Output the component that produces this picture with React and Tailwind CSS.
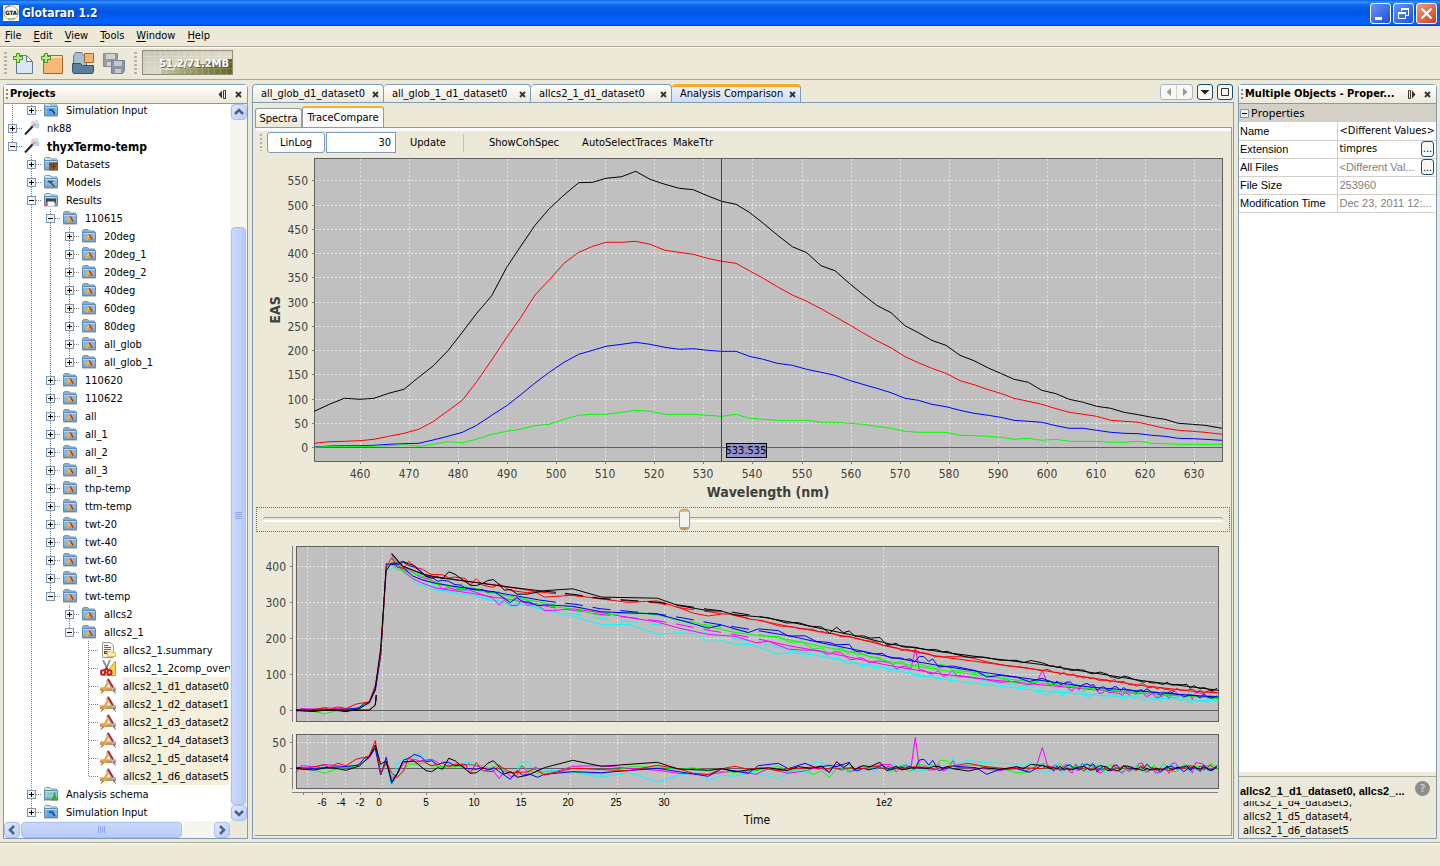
import React, { useState } from 'react';

const treeRows = [
  { level: 1, label: 'Simulation Input', icon: 'input', state: 'closed' },
  { level: 0, label: 'nk88', icon: 'wand', state: 'closed' },
  { level: 0, label: 'thyxTermo-temp', icon: 'wand', state: 'open', bold: true },
  { level: 1, label: 'Datasets', icon: 'datasets', state: 'closed' },
  { level: 1, label: 'Models', icon: 'models', state: 'closed' },
  { level: 1, label: 'Results', icon: 'results', state: 'open' },
  { level: 2, label: '110615', icon: 'folder', state: 'open' },
  { level: 3, label: '20deg', icon: 'folder', state: 'closed' },
  { level: 3, label: '20deg_1', icon: 'folder', state: 'closed' },
  { level: 3, label: '20deg_2', icon: 'folder', state: 'closed' },
  { level: 3, label: '40deg', icon: 'folder', state: 'closed' },
  { level: 3, label: '60deg', icon: 'folder', state: 'closed' },
  { level: 3, label: '80deg', icon: 'folder', state: 'closed' },
  { level: 3, label: 'all_glob', icon: 'folder', state: 'closed' },
  { level: 3, label: 'all_glob_1', icon: 'folder', state: 'closed' },
  { level: 2, label: '110620', icon: 'folder', state: 'closed' },
  { level: 2, label: '110622', icon: 'folder', state: 'closed' },
  { level: 2, label: 'all', icon: 'folder', state: 'closed' },
  { level: 2, label: 'all_1', icon: 'folder', state: 'closed' },
  { level: 2, label: 'all_2', icon: 'folder', state: 'closed' },
  { level: 2, label: 'all_3', icon: 'folder', state: 'closed' },
  { level: 2, label: 'thp-temp', icon: 'folder', state: 'closed' },
  { level: 2, label: 'ttm-temp', icon: 'folder', state: 'closed' },
  { level: 2, label: 'twt-20', icon: 'folder', state: 'closed' },
  { level: 2, label: 'twt-40', icon: 'folder', state: 'closed' },
  { level: 2, label: 'twt-60', icon: 'folder', state: 'closed' },
  { level: 2, label: 'twt-80', icon: 'folder', state: 'closed' },
  { level: 2, label: 'twt-temp', icon: 'folder', state: 'open' },
  { level: 3, label: 'allcs2', icon: 'folder', state: 'closed' },
  { level: 3, label: 'allcs2_1', icon: 'folder', state: 'open' },
  { level: 4, label: 'allcs2_1.summary', icon: 'summary' },
  { level: 4, label: 'allcs2_1_2comp_overv', icon: 'scissors' },
  { level: 4, label: 'allcs2_1_d1_dataset0', icon: 'compass', selected: true },
  { level: 4, label: 'allcs2_1_d2_dataset1', icon: 'compass', selected: true },
  { level: 4, label: 'allcs2_1_d3_dataset2', icon: 'compass', selected: true },
  { level: 4, label: 'allcs2_1_d4_dataset3', icon: 'compass', selected: true },
  { level: 4, label: 'allcs2_1_d5_dataset4', icon: 'compass', selected: true },
  { level: 4, label: 'allcs2_1_d6_dataset5', icon: 'compass', selected: true },
  { level: 1, label: 'Analysis schema', icon: 'schema', state: 'closed' },
  { level: 1, label: 'Simulation Input', icon: 'input', state: 'closed' },
];

// Trace coordinates are kept in thirds of a pixel, relative to the plot origin.
const spectrumX = [
  163, 208, 253, 300, 342, 386, 432, 476, 519, 563, 607, 650, 695, 740, 780, 825, 868, 912, 956, 998, 1038, 1085, 1127, 1170, 1215, 1258, 1300, 1342,
  1385, 1428, 1468, 1510, 1552, 1597, 1640, 1683, 1725, 1768, 1808, 1850, 1893, 1935, 1975, 2015, 2058, 2100, 2142, 2185, 2222, 2262, 2305, 2345, 2388,
  2428, 2470, 2510, 2552, 2592, 2635, 2675, 2715, 2755, 2797, 2835, 2886,
];
const spectra = [
  {
    color: '#000000',
    y: [
      754, 733, 715, 718, 715, 700, 688, 652, 618, 573, 517, 460, 407, 322, 262, 196, 146, 105, 68, 67, 55, 50, 34, 58, 73, 85, 89, 107, 124, 133, 157, 190,
      225, 260, 278, 317, 332, 370, 403, 436, 458, 497, 518, 541, 556, 586, 602, 624, 640, 658, 667, 691, 701, 718, 727, 739, 745, 757, 764, 772, 778, 790,
      793, 796, 805,
    ],
  },
  {
    color: '#ff0000',
    y: [
      850, 845, 844, 842, 838, 829, 820, 808, 785, 753, 721, 665, 600, 532, 476, 405, 360, 310, 277, 259, 247, 247, 244, 253, 271, 277, 283, 295, 304, 310,
      332, 355, 380, 405, 424, 446, 470, 494, 518, 542, 563, 590, 608, 625, 640, 662, 674, 689, 700, 715, 724, 733, 746, 757, 763, 769, 781, 784, 787, 796,
      805, 811, 814, 817, 823,
    ],
  },
  {
    color: '#0000ff',
    y: [
      861, 858, 857, 857, 856, 853, 851, 850, 840, 829, 817, 796, 766, 737, 706, 669, 637, 607, 583, 571, 559, 553, 547, 553, 562, 568, 566, 571, 574, 574,
      589, 598, 610, 616, 628, 637, 646, 661, 673, 685, 698, 715, 721, 733, 740, 751, 760, 766, 772, 781, 784, 787, 797, 805, 805, 811, 817, 820, 821, 826,
      829, 835, 836, 838, 841,
    ],
  },
  {
    color: '#00ff00',
    y: [
      862, 859, 859, 859, 859, 857, 854, 859, 853, 845, 848, 838, 823, 814, 808, 797, 793, 778, 766, 763, 763, 757, 751, 754, 763, 763, 763, 766, 769, 763,
      775, 778, 781, 781, 781, 787, 787, 790, 793, 799, 805, 814, 817, 817, 817, 826, 827, 829, 832, 838, 835, 841, 838, 844, 844, 844, 847, 847, 844, 850,
      851, 853, 853, 853, 853,
    ],
  },
];

const riseX = [120, 340, 358, 374, 391];
const riseY = [631, 631, 613, 452, 214];
const fitX = [
  407, 440, 470, 500, 540, 600, 655, 710, 760, 800, 850, 900, 960, 1032, 1205, 1282, 1357, 1432, 1512, 1602, 1702, 1802, 1902, 2052, 2202, 2352, 2502, 2652,
  2802, 2888,
];

const decays = [
  {
    color: '#00ffff',
    fit: [175, 215, 245, 258, 270, 279, 288, 299, 308, 314, 324, 335, 343, 355, 374, 386, 400, 415, 430, 450, 470, 490, 508, 536, 556, 572, 585, 592, 600, 603],
    residual: [
      [120, 806], [160, 808], [205, 800], [240, 803], [300, 798], [325, 775], [340, 770], [358, 742], [374, 825], [391, 790], [407, 855], [424, 790], [443, 778],
      [475, 770], [493, 760], [510, 782], [527, 778], [545, 805], [560, 803], [600, 800], [628, 787], [645, 787], [665, 800], [680, 810], [710, 810], [740, 808],
      [765, 820], [780, 812], [795, 787], [815, 785], [830, 806], [870, 810], [950, 816], [1037, 832], [1120, 818], [1204, 847], [1267, 826], [1320, 818],
      [1357, 841], [1397, 826], [1437, 829], [1487, 817], [1567, 835], [1600, 817], [1637, 810], [1650, 822], [1672, 785], [1697, 789], [1717, 800],
    ],
    gap: [[2090, 772], [2100, 792], [2137, 781], [2182, 788], [2232, 790], [2282, 792], [2308, 798], [2321, 785]],
    seed: 7,
    amp: 16,
  },
  {
    color: '#ff00ff',
    fit: [168, 212, 236, 250, 264, 273, 281, 291, 298, 306, 315, 324, 332, 343, 362, 376, 391, 403, 418, 438, 455, 476, 497, 522, 539, 554, 568, 580, 588, 592],
    residual: [
      [120, 818], [135, 797], [180, 800], [205, 793], [240, 797], [290, 803], [340, 775], [358, 740], [374, 820], [391, 790], [407, 835], [424, 822], [443, 790],
      [475, 778], [490, 783], [527, 778], [545, 787], [560, 805], [578, 795], [597, 800], [640, 792], [680, 803], [710, 810], [730, 836], [745, 812], [765, 830],
      [783, 826], [797, 797], [815, 816], [840, 800], [865, 825], [900, 815], [950, 799], [1037, 797], [1120, 805], [1204, 811], [1267, 820], [1357, 823],
      [1437, 812], [1500, 823], [1537, 806], [1597, 820], [1650, 812], [1672, 805], [1697, 805],
    ],
    gap: [[2090, 782], [2100, 802], [2172, 805], [2232, 812], [2282, 800], [2310, 812], [2341, 800], [2359, 742], [2375, 798]],
    spike: [1978, 712],
    seed: 23,
    amp: 17,
  },
  {
    color: '#00ff00',
    fit: [170, 208, 228, 240, 252, 264, 270, 280, 289, 297, 306, 315, 322, 335, 345, 362, 375, 388, 404, 420, 440, 460, 485, 510, 530, 549, 566, 578, 589, 596],
    residual: [
      [120, 803], [160, 805], [205, 820], [240, 808], [280, 800], [310, 800], [340, 765], [358, 740], [374, 823], [391, 785], [407, 840], [424, 832], [443, 810],
      [458, 792], [475, 793], [510, 788], [527, 797], [560, 800], [600, 800], [640, 795], [680, 797], [700, 805], [730, 793], [745, 815], [765, 820], [780, 816],
      [797, 797], [820, 812], [845, 820], [865, 815], [950, 815], [1037, 822], [1120, 800], [1204, 801], [1267, 808], [1312, 803], [1357, 812], [1437, 817],
      [1517, 810], [1567, 799], [1600, 815], [1637, 803], [1672, 824], [1697, 812], [1720, 832], [1747, 800],
    ],
    gap: [[2052, 781], [2070, 781], [2090, 800], [2140, 795], [2200, 800], [2252, 810], [2280, 818], [2310, 818], [2340, 795], [2370, 790]],
    seed: 41,
    amp: 14,
  },
  {
    color: '#0000ff',
    fit: [162, 202, 228, 240, 250, 260, 267, 275, 284, 291, 300, 307, 313, 326, 342, 354, 368, 380, 393, 408, 430, 450, 471, 497, 520, 541, 561, 573, 586, 591],
    residual: [
      [120, 802], [160, 806], [205, 803], [265, 800], [308, 795], [325, 775], [340, 770], [358, 745], [374, 825], [391, 772], [407, 850], [424, 822], [443, 780],
      [458, 775], [475, 763], [495, 770], [510, 785], [527, 782], [545, 795], [560, 787], [578, 787], [597, 797], [615, 795], [628, 805], [661, 808], [680, 803],
      [695, 810], [715, 803], [730, 815], [763, 838], [783, 812], [800, 826], [820, 822], [845, 832], [865, 823], [950, 815], [1037, 818], [1204, 805],
      [1312, 822], [1357, 829], [1397, 806], [1477, 820], [1507, 797], [1567, 790], [1597, 806], [1647, 790], [1680, 803], [1720, 796], [1740, 800], [1780, 787],
    ],
    gap: [[1990, 780], [2004, 778], [2018, 795], [2030, 781], [2048, 812], [2090, 798], [2160, 803], [2192, 823], [2232, 808], [2282, 806], [2320, 817], [2359, 795]],
    seed: 58,
    amp: 13,
  },
  {
    color: '#ff0000',
    fit: [163, 200, 211, 223, 232, 240, 247, 255, 262, 268, 276, 281, 287, 296, 309, 325, 335, 346, 362, 380, 397, 415, 441, 470, 490, 510, 533, 556, 573, 579],
    residual: [
      [120, 807], [160, 803], [205, 795], [220, 802], [245, 790], [270, 797], [300, 778], [340, 768], [358, 722], [374, 822], [391, 785], [407, 820], [424, 832],
      [443, 812], [458, 772], [478, 787], [500, 783], [525, 797], [560, 790], [578, 800], [597, 793], [628, 793], [643, 820], [661, 788], [680, 812], [710, 815],
      [730, 797], [748, 808], [765, 818], [815, 816], [835, 806], [865, 825], [950, 805], [1117, 812], [1204, 796], [1267, 806], [1312, 820], [1357, 824],
      [1397, 806], [1437, 799], [1477, 808], [1517, 803], [1567, 812], [1602, 805],
    ],
    gap: [[2090, 798], [2137, 790], [2190, 800], [2252, 806], [2300, 803], [2359, 806]],
    seed: 73,
    amp: 8,
  },
  {
    color: '#000000',
    fit: [160, 198, 210, 222, 231, 239, 247, 254, 261, 266, 272, 277, 284, 295, 307, 317, 328, 337, 350, 366, 387, 408, 432, 455, 475, 493, 517, 541, 560, 571],
    residual: [
      [120, 805], [140, 808], [175, 810], [210, 803], [240, 805], [270, 811], [310, 798], [340, 770], [358, 735], [374, 793], [390, 783], [407, 847], [424, 820],
      [440, 785], [460, 785], [475, 783], [495, 800], [510, 812], [527, 815], [545, 803], [560, 808], [578, 775], [597, 782], [615, 797], [643, 820], [661, 818],
      [680, 805], [695, 790], [712, 782], [730, 800], [745, 822], [765, 815], [783, 832], [815, 826], [865, 803], [950, 781], [1037, 799], [1204, 787],
      [1267, 807], [1357, 811], [1397, 806], [1437, 815], [1477, 810], [1537, 803], [1592, 812], [1627, 800], [1662, 805], [1697, 798], [1720, 818], [1742, 785],
      [1762, 803], [1780, 790], [1797, 808], [1822, 797], [1842, 800], [1872, 787], [1892, 812],
    ],
    gap: [[2090, 806], [2137, 813], [2182, 803], [2232, 808], [2282, 800], [2302, 806], [2325, 793], [2359, 797]],
    seed: 91,
    amp: 8,
  },
];

function interpolate(xs, ys, x) {
  for (let i = 1; i < xs.length; i += 1) {
    if (x <= xs[i]) {
      const t = (x - xs[i - 1]) / (xs[i] - xs[i - 1]);
      return ys[i - 1] + t * (ys[i] - ys[i - 1]);
    }
  }
  return ys[ys.length - 1];
}

// Detector noise in the long-time tail, repeatable for each trace.
function noise(seed, from, to, amp) {
  const points = [];
  let state = seed;
  for (let x = from; x < to; x += from > 2300 ? 10 : 14) {
    state = (state * 1103515245 + 12345) % 2147483648;
    points.push([x, 804 + (state / 2147483648 - 0.5) * 2 * amp]);
  }
  return points;
}

function residualOf(trace) {
  const last = trace.residual[trace.residual.length - 1][0];
  let middle = noise(trace.seed, last + 14, trace.gap[0][0] - 8, trace.amp * 0.8);
  if (trace.spike) {
    const [sx, sy] = trace.spike;
    middle = middle.filter(([x]) => Math.abs(x - sx) > 14);
    middle.push([sx - 13, 803], [sx, sy], [sx + 12, 800]);
    middle.sort((a, b) => a[0] - b[0]);
  }
  const tail = noise(trace.seed + 5, trace.gap[trace.gap.length - 1][0] + 14, 2886, trace.amp);
  return [...trace.residual, ...middle, ...trace.gap, ...tail];
}

const toPoints = (pairs) => pairs.map(([x, y]) => `${(x / 3).toFixed(1)},${(y / 3).toFixed(1)}`).join(' ');

function TreeIcon({ name }) {
  if (name === 'wand') {
    return (
      <svg className="h-4 w-4" viewBox="0 0 16 16">
        <circle cx="9" cy="4" r="2.5" fill="#f6c8f4" opacity=".8" />
        <circle cx="12.5" cy="2.5" r="2.5" fill="#b8f0c0" opacity=".9" />
        <circle cx="13" cy="6" r="2.5" fill="#b9c8ff" opacity=".9" />
        <circle cx="9" cy="2" r="1.5" fill="#ffb9c8" opacity=".8" />
        <path d="M1 14.5 9 6" stroke="#222" strokeWidth="2" />
        <path d="M8.5 6.5 11 4" stroke="#aaa" strokeWidth="2" />
        <path d="M2.5 15l8-8.5" stroke="#ccc" strokeWidth=".6" />
      </svg>
    );
  }
  if (name === 'summary') {
    return (
      <svg className="h-4 w-4" viewBox="0 0 16 16">
        <path d="M2.5.5h8l3 3v12h-11z" fill="#f4f4f0" stroke="#9a9a92" />
        <path d="M4 3.5h4M4 5.5h7M4 7.5h7" stroke="#666" />
        <path d="M4 9h4v3H4z" fill="#5a4210" />
        <path d="M5 10h2v1H5z" fill="#f0b030" />
        <path d="M7.5 9.5h3l1 1h4v4h-8z" fill="#fbf0a0" stroke="#d8c05a" />
      </svg>
    );
  }
  if (name === 'scissors') {
    return (
      <svg className="h-4 w-4" viewBox="0 0 16 16">
        <path d="M15.5 1v14.5H4z" fill="#f5d24a" stroke="#d0a020" />
        <path d="M3 0l4.500 9M10 0L6 9" stroke="#8a8f95" strokeWidth="1.8" />
        <ellipse cx="3" cy="12.500" rx="2" ry="2.300" fill="#fff" stroke="#c8161b" strokeWidth="2" />
        <ellipse cx="9.500" cy="12.500" rx="2" ry="2.300" fill="#fff" stroke="#c8161b" strokeWidth="2" />
        <path d="M4.500 10.500L6.500 8l1.500 2.500" stroke="#c8161b" strokeWidth="2" fill="none" />
      </svg>
    );
  }
  if (name === 'compass') {
    return (
      <svg className="h-4 w-4" viewBox="0 0 16 16">
        <path d="M0 9.500h16v3.500H0z" fill="#c4935a" />
        <path d="M0 10h16" stroke="#dfb88a" />
        <path d="M7.500 2.500l6.500 11.500" stroke="#b8b8c0" strokeWidth="1.500" />
        <path d="M8 1l5 8.500" stroke="#b3282c" strokeWidth="2" />
        <path d="M13.500 12l2 3.500" stroke="#555" />
        <path d="M8 4.500L3 13.500" stroke="#f59a20" strokeWidth="2.200" />
        <path d="M8.500 5.500L4.500 13" stroke="#fcd070" strokeWidth=".6" />
        <path d="M3 13l-2 2.500" stroke="#444" />
        <path d="M6.500 3.500l1.500-3" stroke="#777" />
      </svg>
    );
  }
  return (
    <svg className="h-4 w-4" viewBox="0 0 16 16">
      <path d="M1.500 4V2.500l1-1h4.500l1 1.500h5.500V6h-12z" fill={name === 'folder' ? '#86b1cf' : '#dfe8bd'} stroke="#6f9cc0" />
      <path d="M1.500 4.500h13v9h-13z" fill={name === 'schema' ? '#9accd0' : '#8db6da'} stroke="#5c8cb8" />
      <path d="M2 5.500h12" stroke="#bcd8ee" />
      <path d="M2 11h12v2H2z" fill="#6f9dc8" fillOpacity=".6" />
      <path d="M1 14.500h14" stroke="#c9c9c9" />
      {name === 'folder' && (
        <>
          <path d="M8 6.500l3 5" stroke="#c8321a" strokeWidth="1.800" />
          <path d="M8 7.500L5.500 12" stroke="#f7c832" strokeWidth="1.600" />
          <path d="M5 10.500h5" stroke="#e3a530" />
        </>
      )}
      {name === 'datasets' && (
        <>
          <path d="M6 6.500h9v8H6z" fill="#8a5a2c" />
          <path d="M8 10.500h5M10.500 9v4M6 8h9" stroke="#5a3512" />
        </>
      )}
      {name === 'models' && <path d="M5 7.500h4L7.500 8.500l4 4M5 7.500l2 1" stroke="#4a4a4a" strokeWidth="1.300" fill="none" />}
      {name === 'input' && (
        <>
          <path d="M4 6h8v7H4z" fill="#5aa5ea" />
          <path d="M6 8h3l3 4" stroke="#1c4a80" strokeWidth="1.500" fill="none" />
        </>
      )}
      {name === 'results' && (
        <>
          <path d="M3 6.500h10v4.500H3z" fill="#444" />
          <path d="M4.500 9.500h7V14h-7z" fill="#f8f8f8" />
          <path d="M3 12h2v1H3z" fill="#c33" />
        </>
      )}
      {name === 'schema' && (
        <>
          <path d="M10.500 6.500v3l-2.500 5h7l-2.500-5v-3z" fill="#2fa83c" />
          <path d="M5 8.500l4-1.500" stroke="#6fd88a" strokeWidth="1.500" />
        </>
      )}
    </svg>
  );
}

// Whether the branch at `level` goes on below the given row.
function continues(index, level) {
  const next = treeRows.slice(index + 1).find((row) => row.level <= level);
  return Boolean(next) && next.level === level;
}

function TreeRow({ row, index }) {
  const goesOn = continues(index, row.level);
  const node = (
    <svg className="h-[18px] w-[19px]" viewBox="0 0 19 18" shapeRendering="crispEdges">
      <path d={goesOn ? 'M8.500 0v18M9 9.500h10' : 'M8.500 0v10M9 9.500h10'} stroke="#808080" strokeDasharray="1 1" fill="none" />
      {row.state && (
        <>
          <path d="M4.500 5.500h8v8h-8z" fill="#f4f2ea" stroke="#7898b5" />
          <path d={row.state === 'closed' ? 'M6 9.500h5M8.500 7v5' : 'M6 9.500h5'} stroke="#000" />
        </>
      )}
    </svg>
  );
  return (
    <li className="flex h-[18px] items-center whitespace-nowrap">
      {Array.from({ length: row.level }, (_, level) => (
        <svg key={level} className="h-[18px] w-[19px] shrink-0" viewBox="0 0 19 18" shapeRendering="crispEdges">
          {continues(index, level) && <path d="M8.500 0v18" stroke="#808080" strokeDasharray="1 1" />}
        </svg>
      ))}
      {row.state ? (
        <button type="button" aria-label={`Toggle ${row.label}`} className="shrink-0">
          {node}
        </button>
      ) : (
        <span className="shrink-0">{node}</span>
      )}
      <span className="mr-[7px] ml-px shrink-0">
        <TreeIcon name={row.icon} />
      </span>
      <span className={`h-[18px] leading-5 ${row.bold ? 'text-xs leading-5 font-bold' : ''} ${row.selected ? 'bg-[#f4f0db]' : ''}`}>{row.label}</span>
    </li>
  );
}

function ScrollArrow({ direction }) {
  const paths = { up: 'M4 10l4-4 4 4', down: 'M4 6l4 4 4-4', left: 'M10 4L6 8l4 4', right: 'M6 4l4 4-4 4' };
  return (
    <button type="button" aria-label={`Scroll ${direction}`} className="h-4 w-4 shrink-0 rounded-sm border border-[#a9bff0] bg-linear-to-br from-[#e0e9fe] to-[#b9ccfb]">
      <svg className="-m-px h-4 w-4" viewBox="0 0 16 16">
        <path d={paths[direction]} fill="none" stroke="#4d6185" strokeWidth="2.500" />
      </svg>
    </button>
  );
}

function Grip() {
  return <span className="h-[22px] w-[3px] shrink-0 bg-[repeating-linear-gradient(to_bottom,#b5b2a4_0_2px,transparent_2px_4px)]" />;
}

function CloseGlyph() {
  return (
    <svg className="h-[7px] w-[7px]" viewBox="0 0 7 7">
      <path d="M1 1l5 5M6 1L1 6" stroke="#333" strokeWidth="1.800" />
    </svg>
  );
}

function PanelHeader({ title, side }) {
  return (
    <div className="flex h-[19px] shrink-0 items-center border-b border-[#7f9db9] bg-linear-to-b from-white to-[#ece9d8] pr-[5px] pl-[2px]">
      <span className="h-[11px] w-[2px] bg-[repeating-linear-gradient(to_bottom,#8d8b80_0_2px,transparent_2px_4px)]" />
      <h2 className="ml-[2px] flex-1 text-[11px] leading-[18px] font-bold whitespace-nowrap">{title}</h2>
      <button type="button" aria-label="Minimize window" className="mr-2">
        <svg className="h-[9px] w-[9px]" viewBox="0 0 9 9">
          {side === 'left' ? (
            <>
              <path d="M4 .5v8L.5 4.500z" fill="#333" />
              <path d="M5.500.5h2v8h-2z" fill="none" stroke="#333" />
            </>
          ) : (
            <>
              <path d="M5 .5v8l3.500-4z" fill="#333" />
              <path d="M1.500.5h2v8h-2z" fill="none" stroke="#333" />
            </>
          )}
        </svg>
      </button>
      <button type="button" aria-label={`Close ${title}`}>
        <CloseGlyph />
      </button>
    </div>
  );
}

function TitleBar() {
  return (
    <header className="flex h-[26px] shrink-0 items-center bg-[linear-gradient(to_bottom,#0a5fe0_0,#3593ff_2px,#0a66ee_5px,#0054e3_12px,#0062fa_20px,#0060f5_24px,#003fc0_26px)] px-[3px] text-white">
      <svg className="h-4 w-4" viewBox="0 0 16 16">
        <path d="M0 0h16v16H0z" fill="#fff" />
        <circle cx="8" cy="8" r="7" fill="#fff" stroke="#d8a54a" />
        <path d="M2 3a7 7 0 0 1 5-2.500" stroke="#d04040" fill="none" />
        <path d="M14 4a7 7 0 0 1 1 5" stroke="#4a90d0" fill="none" />
        <path d="M5 13.500a7 7 0 0 0 7-.5" stroke="#58b058" fill="none" />
        <text x="8" y="10" textAnchor="middle" className="fill-black text-[6px] font-bold">
          GTA
        </text>
      </svg>
      <h1 className="ml-[3px] flex-1 text-xs leading-5 font-bold [text-shadow:1px_1px_1px_#0a2a80]">Glotaran 1.2</h1>
      <div className="flex gap-[2px]">
        <button type="button" aria-label="Minimize" className="h-[21px] w-[21px] rounded-[3px] border border-white bg-linear-to-br from-[#6a93f0] to-[#1a4fd8]">
          <svg viewBox="0 0 19 19">
            <path d="M4 13h7v3H4z" fill="#fff" />
          </svg>
        </button>
        <button type="button" aria-label="Restore" className="h-[21px] w-[21px] rounded-[3px] border border-white bg-linear-to-br from-[#6a93f0] to-[#1a4fd8]">
          <svg viewBox="0 0 19 19">
            <path d="M7.500 7V4.500h7v7H12" fill="none" stroke="#fff" />
            <path d="M7 5h8M4 9h8" stroke="#fff" strokeWidth="2" />
            <path d="M4.500 8.500h7v6h-7z" fill="none" stroke="#fff" />
          </svg>
        </button>
        <button type="button" aria-label="Close" className="h-[21px] w-[21px] rounded-[3px] border border-white bg-linear-to-br from-[#f09a80] to-[#cc3a10]">
          <svg viewBox="0 0 19 19">
            <path d="M4.500 4.500l10 10M14.500 4.500l-10 10" stroke="#fff" strokeWidth="2.200" />
          </svg>
        </button>
      </div>
    </header>
  );
}

function MenuBar() {
  return (
    <nav className="flex h-[21px] shrink-0 items-center gap-3 border-b border-[#aca899] px-[5px]">
      {['File', 'Edit', 'View', 'Tools', 'Window', 'Help'].map((item) => (
        <button key={item} type="button" className="leading-4">
          <span className="underline underline-offset-2">{item[0]}</span>
          {item.slice(1)}
        </button>
      ))}
    </nav>
  );
}

function Toolbar() {
  return (
    <div className="flex h-[33px] shrink-0 items-center border-t border-b border-t-white border-b-[#aca899] pb-[2px] pl-1">
      <Grip />
      <button type="button" aria-label="New file" className="ml-[5px]">
        <svg className="h-6 w-6" viewBox="0 0 24 24">
          <path d="M4.500 4.500h10l6 6v12h-16z" fill="#dbe7f3" stroke="#5f7a94" />
          <path d="M14.500 4.500v6h6z" fill="#fff" stroke="#5f7a94" />
          <path d="M4.500 2.500h3v3h3v3h-3v3h-3v-3h-3v-3h3z" fill="#b5f08a" stroke="#3d9a1c" />
        </svg>
      </button>
      <button type="button" aria-label="New project" className="ml-1">
        <svg className="h-6 w-6" viewBox="0 0 24 24">
          <path d="M3.500 4.500h19v18h-19z" fill="#f5b877" stroke="#a56a30" />
          <path d="M4 6h18" stroke="#fbdcb8" strokeWidth="2" />
          <path d="M4.500 2.500h3v3h3v3h-3v3h-3v-3h-3v-3h3z" fill="#b5f08a" stroke="#3d9a1c" />
        </svg>
      </button>
      <button type="button" aria-label="Open project" className="ml-[7px]">
        <svg className="h-6 w-6" viewBox="0 0 24 24">
          <path d="M2.500 20V5l2-3.500h6l2 3h3V20z" fill="#a9bed3" stroke="#5f7a94" />
          <path d="M13.500 2.500h9v9h-9z" fill="#f2b36f" stroke="#a56a30" />
          <path d="M1.500 12.500h8l2 2h11v6l-1 2h-19l-1-2z" fill="#5e7ea0" stroke="#36506c" />
        </svg>
      </button>
      <button type="button" aria-label="Save all" disabled className="ml-[7px]">
        <svg className="h-6 w-6" viewBox="0 0 24 24">
          <path d="M1.500 2.500h14v13h-14z" fill="#9a9ca4" stroke="#8a8c94" />
          <path d="M4 3h9v5H4zM5 11h7v4H5z" fill="#cfd0d2" />
          <path d="M9.500 9.500h13v10l-2 3h-11z" fill="#8b95a2" stroke="#7b8592" />
          <path d="M12 10h8v5h-8zM13 18h6v4h-6z" fill="#c3c9cf" />
        </svg>
      </button>
      <span className="ml-2 flex">
        <Grip />
      </span>
      <button type="button" className="relative ml-[5px] h-[25px] w-[91px] border border-[#8f8c7c] bg-linear-to-br from-[#c9c6b4] to-[#ece9d8] text-[11px] font-bold text-white">
        <svg className="absolute inset-0 h-full w-full" viewBox="0 0 89 23" shapeRendering="crispEdges">
          <defs>
            <linearGradient id="heap">
              <stop offset="0" stopColor="#c0c49a" />
              <stop offset="1" stopColor="#66661a" />
            </linearGradient>
          </defs>
          <path d="M18 23v-4h14v-2h12v-2h10v-2h9v-2h9v-1h7V8h10v15z" fill="url(#heap)" />
          <path d="M0 5.500h89M0 11.500h89M0 17.500h89M5.500 0v23M11.500 0v23M17.500 0v23M23.500 0v23M29.500 0v23M35.500 0v23M41.500 0v23M47.500 0v23M53.500 0v23M59.500 0v23M65.500 0v23M71.500 0v23M77.500 0v23M83.500 0v23" stroke="#fff" strokeOpacity=".2" />
        </svg>
        <span className="relative block pr-[3px] text-right leading-[25px] [text-shadow:1px_1px_1px_#555]">51.2/71.2MB</span>
      </button>
    </div>
  );
}

function ProjectsPanel() {
  return (
    <aside className="flex w-[245px] shrink-0 flex-col rounded-t-sm border border-[#7f9db9] bg-white">
      <PanelHeader title="Projects" side="left" />
      <div className="flex min-h-0 flex-1">
        <div className="min-w-0 flex-1 overflow-hidden">
          <ul className="-mt-[3px]">
            {treeRows.map((row, index) => (
              <TreeRow key={index} row={row} index={index} />
            ))}
          </ul>
        </div>
        <div className="flex w-[17px] flex-col items-center bg-[#f6f5f0]">
          <ScrollArrow direction="up" />
          <div className="h-[107px]" />
          <div className="flex w-[15px] flex-1 items-center justify-center rounded-sm border border-[#a9bff0] bg-linear-to-r from-[#c9d8fc] to-[#b8cbfb]">
            <span className="h-2 w-[7px] bg-[repeating-linear-gradient(to_bottom,#8fa9e8_0_1px,transparent_1px_2px)]" />
          </div>
          <ScrollArrow direction="down" />
        </div>
      </div>
      <div className="flex h-[17px] items-center bg-[#f6f5f0]">
        <ScrollArrow direction="left" />
        <div className="ml-px flex h-4 w-[161px] items-center justify-center rounded-sm border border-[#a9bff0] bg-linear-to-b from-[#c9d8fc] to-[#b8cbfb]">
          <span className="h-[7px] w-2 bg-[repeating-linear-gradient(to_right,#8fa9e8_0_1px,transparent_1px_2px)]" />
        </div>
        <div className="flex-1" />
        <ScrollArrow direction="right" />
        <div className="h-[17px] w-[17px] bg-[#ece9d8]" />
      </div>
    </aside>
  );
}

function DocumentTabs() {
  const tabs = [
    { label: 'all_glob_d1_dataset0', width: 'w-[132px]' },
    { label: 'all_glob_1_d1_dataset0', width: 'w-[147px]' },
    { label: 'allcs2_1_d1_dataset0', width: 'w-[141px]' },
    { label: 'Analysis Comparison', width: 'w-[129px]', active: true },
  ];
  return (
    <div className="flex h-[19px] shrink-0 items-stretch border-b border-[#7f9db9]">
      {tabs.map((tab) => (
        <div
          key={tab.label}
          className={`flex items-end justify-between rounded-t-sm border-r border-l border-[#7f9db9] pr-1 pl-2 not-first:border-l-0 ${tab.width} ${
            tab.active ? 'border-t-3 border-t-[#f7a928] bg-linear-to-b from-[#eef2fb] to-[#cfdcf5]' : 'border-t bg-linear-to-b from-white to-[#ece9d8]'
          }`}
        >
          <button type="button" className="leading-4 whitespace-nowrap">
            {tab.label}
          </button>
          <button type="button" aria-label={`Close ${tab.label}`} className="pb-1">
            <CloseGlyph />
          </button>
        </div>
      ))}
      <div className="flex flex-1 justify-end gap-1 pr-px pb-[2px]">
        <div className="flex h-4 w-[33px] rounded-[3px] border border-[#a3b8cc] bg-[#f8f7f2]">
          <button type="button" aria-label="Scroll tabs left" disabled className="flex-1 border-r border-[#d5d2c5]">
            <svg className="h-[14px] w-[15px]" viewBox="0 0 15 14">
              <path d="M10 3v8L5.500 7z" fill="#9a9a9a" />
            </svg>
          </button>
          <button type="button" aria-label="Scroll tabs right" disabled className="flex-1">
            <svg className="h-[14px] w-[15px]" viewBox="0 0 15 14">
              <path d="M6 3v8l4.500-4z" fill="#9a9a9a" />
            </svg>
          </button>
        </div>
        <button type="button" aria-label="Show opened documents" className="h-4 w-4 rounded-[3px] border border-[#1c4a78] bg-[#f8f7f2]">
          <svg viewBox="0 0 14 14">
            <path d="M2.500 5h9L7 9.500z" fill="#222" />
          </svg>
        </button>
        <button type="button" aria-label="Maximize window" className="h-4 w-4 rounded-[3px] border border-[#1c4a78] bg-[#f8f7f2]">
          <svg viewBox="0 0 14 14">
            <path d="M3.500 3.500h7v7h-7z" fill="none" stroke="#333" />
          </svg>
        </button>
      </div>
    </div>
  );
}

function SpectrumChart() {
  const xTicks = Array.from({ length: 18 }, (_, i) => ({ label: 460 + i * 10, x: 100 + Math.round(i * 49.06) }));
  const yTicks = Array.from({ length: 12 }, (_, i) => ({ label: i * 50, y: 287 - Math.round(i * 24.24) }));
  return (
    <svg className="block w-full" viewBox="-4 -6 975 353" role="img" aria-label="EAS against wavelength">
      <g shapeRendering="crispEdges">
        <path d="M54.500-1.500h908v303h-908z" fill="#c0c0c0" />
        {xTicks.map(({ x, label }) => (
          <g key={label}>
            <path d={`M${x}.5-1v302`} stroke="#e4e4e4" strokeDasharray="2 2" />
            <path d={`M${x}.5 302v2`} stroke="#808080" />
          </g>
        ))}
        {yTicks.map(({ y, label }) => (
          <g key={label}>
            {label > 0 && <path d={`M55 ${y}.5h907`} stroke="#e4e4e4" strokeDasharray="2 2" />}
            <path d={`M52 ${y}.5h2`} stroke="#808080" />
          </g>
        ))}
        <path d="M55 287.500h907" stroke="#606060" />
        <path d="M54.500-1.500h908v303h-908z" fill="none" stroke="#606060" />
      </g>
      {spectra.map((trace) => (
        <polyline key={trace.color} points={toPoints(spectrumX.map((x, i) => [x, trace.y[i]]))} fill="none" stroke={trace.color} />
      ))}
      <path d="M461.500-1v302" stroke="#e00000" shapeRendering="crispEdges" />
      <path d="M466.500 283.500h40v14h-40z" fill="#8080d0" fillOpacity=".75" stroke="#000" shapeRendering="crispEdges" />
      <text x="486" y="294" textAnchor="middle" className="text-[11px]">
        533.535
      </text>
      <g className="fill-[#404040] text-[12px]">
        {xTicks.map(({ x, label }) => (
          <text key={label} x={x} y="318" textAnchor="middle">
            {label}
          </text>
        ))}
        {yTicks.map(({ y, label }) => (
          <text key={label} x="48" y={y + 5} textAnchor="end">
            {label}
          </text>
        ))}
      </g>
      <g className="fill-[#404040] text-[14px] font-bold">
        <text x="508" y="337" textAnchor="middle">
          Wavelength (nm)
        </text>
        <text transform="translate(20 150) rotate(-90)" textAnchor="middle">
          EAS
        </text>
      </g>
    </svg>
  );
}

function TraceChart() {
  const gridX = [51, 70, 89, 108, 126, 173, 220, 267, 314, 361, 408, 627];
  const timeTicks = [
    [47, ''], [66, '-6'], [85, '-4'], [104, '-2'], [123, '0'], [170, '5'], [218, '10'], [265, '15'], [312, '20'], [360, '25'], [408, '30'], [628, '1e2'],
  ];
  const levels = [[400, 66], [300, 102], [200, 138], [100, 174], [0, 210]];
  return (
    <svg className="block w-full" viewBox="0 32 975 303" role="img" aria-label="Time traces with residuals">
      <g shapeRendering="crispEdges">
        <path d="M40.500 46.500h922v175h-922zM40.500 234.500h922v54h-922z" fill="#c0c0c0" />
        {gridX.map((x) => (
          <path key={x} d={`M${x}.5 47v174M${x}.5 235v53`} stroke="#e4e4e4" strokeDasharray="2 2" />
        ))}
        {levels.map(([label, y]) => (
          <g key={label}>
            {label > 0 && <path d={`M41 ${y}.5h921`} stroke="#e4e4e4" strokeDasharray="2 2" />}
            <path d={`M34 ${y}.5h2`} stroke="#808080" />
          </g>
        ))}
        <path d="M41 242.500h921" stroke="#e4e4e4" strokeDasharray="2 2" />
        <path d="M34 242.500h2M34 268.500h2M36.500 46v176M36.500 234v55M36 292.500h926" stroke="#808080" fill="none" />
        <path d="M41 210.500h921M41 268.500h921" stroke="#606060" />
        <path d="M40.500 46.500h922v175h-922zM40.500 234.500h922v54h-922z" fill="none" stroke="#606060" />
        {timeTicks.map(([x]) => (
          <path key={x} d={`M${x}.5 293v2`} stroke="#808080" />
        ))}
      </g>
      {decays.map((trace) => {
        const residual = residualOf(trace);
        const xs = [...riseX, ...fitX];
        const ys = [...riseY, ...trace.fit];
        const fit = fitX.map((x, i) => [x, trace.fit[i]]);
        const measured = residual.map(([x, y]) => [x, interpolate(xs, ys, x) + (y - 805) * 0.69]);
        return (
          <g key={trace.color} fill="none" stroke={trace.color}>
            <polyline points={toPoints(measured)} />
            <polyline points={toPoints([[120, 631], [340, 631], [358, 615], [361, 585]])} />
            <polyline points={toPoints(fit.slice(0, 12))} />
            <polyline points={toPoints(fit.slice(11, 19))} strokeDasharray="18 10" strokeDashoffset="19" />
            <polyline points={toPoints(fit.slice(18))} />
            <polyline points={toPoints(residual)} />
          </g>
        );
      })}
      <g className="fill-[#404040] text-[12px]" textAnchor="end">
        {levels.map(([label, y]) => (
          <text key={label} x="30" y={y + 5}>
            {label}
          </text>
        ))}
        <text x="30" y="247">
          50
        </text>
        <text x="30" y="273">
          0
        </text>
      </g>
      <g className="fill-black font-['Liberation_Sans',sans-serif] text-[10px]" textAnchor="middle">
        {timeTicks.map(([x, label]) => (
          <text key={x} x={x} y="306">
            {label}
          </text>
        ))}
      </g>
      <text x="501" y="324" textAnchor="middle" className="text-[12px]">
        Time
      </text>
    </svg>
  );
}

function AnalysisView() {
  const [lower, setLower] = useState(30);
  const [position, setPosition] = useState(438);
  return (
    <main className="flex min-w-0 flex-1 flex-col">
      <DocumentTabs />
      <div className="flex-1 border border-t-0 border-[#7f9db9] pr-px pb-[2px] pl-[2px]">
        <div className="flex h-6 items-end">
          <button type="button" className="h-[19px] w-[47px] rounded-t-[3px] border border-b-0 border-[#919b9c] bg-linear-to-b from-white to-[#ece9d8] pt-px leading-[18px]">
            Spectra
          </button>
          <button type="button" className="h-[21px] w-[82px] rounded-t-[3px] border border-t-2 border-b-0 border-[#919b9c] border-t-[#f9b12d] bg-[#fcfcfe] leading-4">
            TraceCompare
          </button>
        </div>
        <div className="border-t border-r border-b border-[#919b9c] pl-px">
          <div className="flex h-[26px] items-center border-t-3 border-[#fcfcfe] pl-1 leading-4">
            <span className="h-[17px] w-[2px] bg-[repeating-linear-gradient(to_bottom,#b5b2a4_0_2px,transparent_2px_4px)]" />
            <button type="button" className="ml-[5px] h-[21px] w-[58px] rounded-[3px] border border-[#7f9db9] bg-white pt-px">
              LinLog
            </button>
            <input
              aria-label="Linear range"
              value={lower}
              onChange={(event) => setLower(event.target.value)}
              className="ml-px h-[21px] w-[70px] border border-[#7f9db9] bg-white px-1 text-right outline-none"
            />
            <button type="button" className="ml-[14px] w-9 pt-px">Update</button>
            <span className="ml-[17px] h-[18px] w-px bg-[#c5c2b8]" />
            <button type="button" className="ml-[25px] w-[69px] pt-px">ShowCohSpec</button>
            <button type="button" className="ml-6 w-[85px] pt-px">AutoSelectTraces</button>
            <button type="button" className="ml-[6px] pt-px">MakeTtr</button>
          </div>
          <SpectrumChart />
          <div className="mr-px flex h-[25px] items-center border border-dotted border-[#6f6c60] px-[6px]">
            <input
              type="range"
              aria-label="Wavelength"
              min="0"
              max="1000"
              value={position}
              onChange={(event) => setPosition(event.target.value)}
              className="h-[5px] w-full appearance-none rounded-sm border-t border-b-2 border-t-[#9a9a95] border-b-white bg-[#ece9d8] [&::-webkit-slider-thumb]:h-[21px] [&::-webkit-slider-thumb]:w-[11px] [&::-webkit-slider-thumb]:appearance-none [&::-webkit-slider-thumb]:rounded-sm [&::-webkit-slider-thumb]:border [&::-webkit-slider-thumb]:border-[#8d9a9c] [&::-webkit-slider-thumb]:bg-[linear-gradient(to_bottom,#f9b850_0_2px,#f3f3ef_2px_17px,#e0982e_17px)]"
            />
          </div>
          <TraceChart />
        </div>
      </div>
    </main>
  );
}

function PropertiesPanel() {
  const rows = [
    { name: 'Name', value: '<Different Values>' },
    { name: 'Extension', value: 'timpres', more: true },
    { name: 'All Files', value: '<Different Val...', more: true, readOnly: true },
    { name: 'File Size', value: '253960', readOnly: true },
    { name: 'Modification Time', value: 'Dec 23, 2011 12:...', readOnly: true },
  ];
  return (
    <aside className="flex w-[199px] shrink-0 flex-col rounded-t-sm border border-[#7f9db9]">
      <PanelHeader title="Multiple Objects - Proper..." side="right" />
      <div className="min-h-0 flex-1 bg-white">
        <div className="flex h-[18px] items-center gap-[2px] bg-[#d4d0c8] pl-px font-['Noto_Sans',sans-serif]">
          <button type="button" aria-label="Collapse Properties">
            <svg className="h-[9px] w-[9px]" viewBox="0 0 9 9">
              <path d="M.5.5h8v8h-8z" fill="#f4f2ea" stroke="#7898b5" />
              <path d="M2 4.500h5" stroke="#000" />
            </svg>
          </button>
          Properties
        </div>
        <table className="w-full table-fixed border-collapse font-['Liberation_Sans',sans-serif]">
          <tbody>
            {rows.map((row) => (
              <tr key={row.name} className="h-[18px] border-b border-[#d4d0c8]">
                <th scope="row" className="w-[98px] border-r border-[#d4d0c8] p-0 pl-px text-left leading-4 font-normal whitespace-nowrap">
                  {row.name}
                </th>
                <td className="p-0 pl-[2px]">
                  <div className={`flex h-[17px] items-center ${row.readOnly ? 'text-[#808080]' : "font-['DejaVu_Sans_Condensed','DejaVu_Sans',sans-serif]"}`}>
                    <span className="flex-1 leading-4 whitespace-nowrap">{row.value}</span>
                    {row.more && (
                      <button type="button" aria-label={`Edit ${row.name}`} className="mr-[2px] h-4 w-[13px] rounded-[3px] border border-[#1c4a78] bg-[#f8f7f2] leading-3 text-black">
                        ...
                      </button>
                    )}
                  </div>
                </td>
              </tr>
            ))}
          </tbody>
        </table>
      </div>
      <div className="mt-1 flex h-[62px] flex-col border-t border-[#aca899] pt-1">
        <div className="flex h-5 items-start justify-between pr-[6px] pl-px">
          <h3 className="font-['Liberation_Sans',sans-serif] text-[11px] leading-5 font-bold whitespace-nowrap">allcs2_1_d1_dataset0, allcs2_...</h3>
          <button type="button" aria-label="Help" className="h-[15px] w-[15px] shrink-0 rounded-full bg-[#8c8c8c] text-[11px] leading-[15px] font-bold text-[#c5c5c5]">
            ?
          </button>
        </div>
        <div className="flex h-[37px] flex-col justify-end overflow-hidden pl-1 leading-[14px]">
          <p>allcs2_1_d4_dataset3,</p>
          <p>allcs2_1_d5_dataset4,</p>
          <p>allcs2_1_d6_dataset5</p>
        </div>
      </div>
    </aside>
  );
}

export default function App() {
  return (
    <div className="flex h-screen flex-col overflow-hidden bg-[#ece9d8] font-['DejaVu_Sans_Condensed','DejaVu_Sans',sans-serif] text-[11px] text-black">
      <TitleBar />
      <MenuBar />
      <Toolbar />
      <div className="flex min-h-0 flex-1 gap-1 px-[3px] pt-1 pb-[3px]">
        <ProjectsPanel />
        <AnalysisView />
        <PropertiesPanel />
      </div>
      <footer className="h-6 shrink-0 border-t border-[#aca899] shadow-[inset_0_1px_0_#fff]" />
    </div>
  );
}
